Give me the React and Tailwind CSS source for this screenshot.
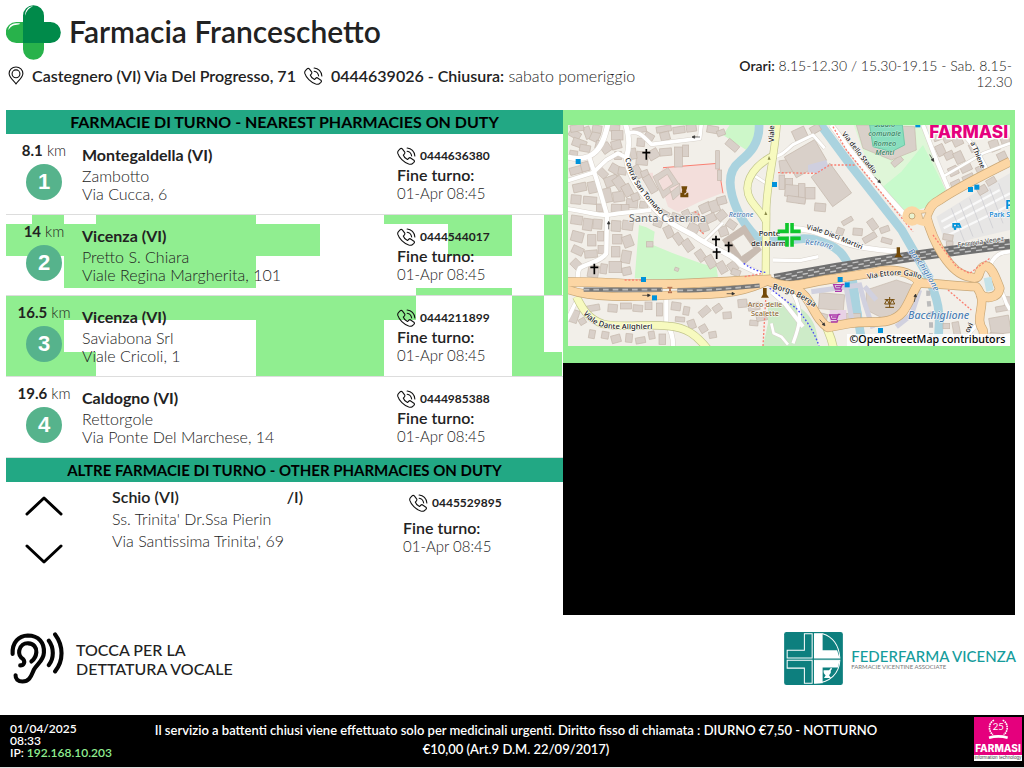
import React from 'react';

const nearest = [
  { id: 1, km: '8.1', city: 'Montegaldella (VI)', name: 'Zambotto', street: 'Via Cucca, 6', phone: '0444636380' },
  { id: 2, km: '14', city: 'Vicenza (VI)', name: 'Pretto S. Chiara', street: 'Viale Regina Margherita, 101', phone: '0444544017' },
  { id: 3, km: '16.5', city: 'Vicenza (VI)', name: 'Saviabona Srl', street: 'Viale Cricoli, 1', phone: '0444211899' },
  { id: 4, km: '19.6', city: 'Caldogno (VI)', name: 'Rettorgole', street: 'Via Ponte Del Marchese, 14', phone: '0444985388' },
];

// green patches behind a row: x, y, width, height
const patches = {
  2: [[26, 0, 32, 9], [90, 0, 160, 9], [378, 0, 128, 9], [0, 9, 314, 32], [442, 9, 64, 32], [58, 41, 192, 32], [410, 73, 96, 7], [538, 0, 18, 80]],
  3: [[0, 0, 410, 24], [506, 0, 32, 56], [0, 24, 58, 32], [250, 24, 128, 56], [0, 56, 90, 24], [506, 56, 50, 24]],
};

const PhoneIcon = () => (
  <svg viewBox="0 0 58 56" className="h-[18px] w-[19px] shrink-0" fill="none" stroke="#111" strokeWidth="3.4" strokeLinecap="round" strokeLinejoin="round" aria-hidden="true">
    <path d="M4 11 L9 6 C11 4 14 4 16 6 L23 15 C25 18 24 20 22 22 L19 25 C21 31 27 37 32 39 L36 35 C38 33 41 33 43 35 L52 41 C54 43 54 46 52 48 L47 52 C44 54 40 54 36 53 C20 48 6 33 2 20 C1 16 1 14 4 11Z" />
    <path d="M31 13 C38 14 44 20 45 28 M31 3 C44 4 54 14 55 28" />
  </svg>
);

const PinIcon = () => (
  <svg viewBox="0 0 48 58" className="h-[19px] w-4 shrink-0" fill="none" stroke="#111" strokeWidth="3.4" strokeLinejoin="round" aria-hidden="true">
    <path d="M24 55 C20 47 3 36 3 23 C3 11 12 3 24 3 C36 3 45 11 45 23 C45 36 28 47 24 55Z" />
    <circle cx="24" cy="24" r="12" />
  </svg>
);

const CrossLogo = () => (
  <svg viewBox="15 15 165 165" className="size-[55px] shrink-0" role="img" aria-label="Farmacia">
    <path d="M66 66 H46 A31 31 0 0 0 46 129 H66 V148 A31 31 0 0 0 129 148 V129 H66Z" fill="#28b24b" />
    <path d="M66 129 V47 A31 31 0 0 1 129 47 V66 H148 A31 31 0 0 1 148 129Z" fill="#008a4a" />
    <path d="M22 91 C23 77 32 71 45 70 C60 69 62 73 48 74 C34 75 27 81 22 91Z M72 47 C73 30 81 20 96 19 C84 24 76 33 72 47Z" fill="#fff" />
  </svg>
);

const EarIcon = () => (
  <svg viewBox="0 0 164 160" className="h-[53px] w-[54px] shrink-0" fill="none" stroke="#050505" strokeWidth="12.5" strokeLinecap="round" aria-hidden="true">
    <path d="M8 66 C6 30 27 11 54 10 C87 10 105 32 103 62 C102 87 82 96 72 115 C65 130 61 150 38 150 C24 150 16 141 17 131" />
    <path d="M31 101 C42 101 47 91 40 82 C31 76 26 68 28 56 C31 40 43 33 56 34 C72 35 81 47 80 61 C79 75 74 82 65 89" />
    <path d="M118 26 C134 47 134 80 118 100 M137 7 C163 42 163 87 137 119" />
  </svg>
);

const FederfarmaMark = () => (
  <svg viewBox="48 38 174 157" className="h-[53px] w-[59px] shrink-0" aria-hidden="true">
    <rect x="48" y="38" width="174" height="157" rx="7" fill="#0d7f7e" />
    <g fill="none" stroke="#fff" strokeWidth="3">
      <path d="M108 43 H131 V115 H57 V92 H108Z" />
      <path d="M57 122 H131 V190 H108 V145 H57Z" />
      <path d="M138 43 H162 C191 51 211 77 213 115 H138Z" />
      <path d="M138 122 H213 C212 159 185 189 138 190Z" />
    </g>
    <path d="M138 43 H162 V92 H205 L212 115 H138Z M138 122 H212 L208 143 H162 V190 H138Z" fill="#fff" />
    <path d="M165 151 H181 L187 144 L190 147 L186 153 C188 159 184 163 181 166 L187 174 H166 L171 166 C166 162 164 158 165 151Z" fill="#fff" />
  </svg>
);

const FarmasiBadge = () => (
  <svg viewBox="0 0 144 132" className="h-11 w-12 shrink-0" role="img" aria-label="Farmasi information technology">
    <rect width="144" height="132" fill="#e5007d" />
    <rect y="114" width="144" height="18" fill="#fff" />
    <g fill="none" stroke="#fff">
      <path d="M60 10 C43 17 42 43 57 53 M86 10 C103 17 104 43 89 53" strokeWidth="5" strokeDasharray="5 2" />
      <path d="M45 62 Q73 54 101 62" strokeWidth="8" />
    </g>
    <text x="73" y="38" textAnchor="middle" fontSize="29" fontWeight="400" fill="#fff" fontFamily="Lato, sans-serif">25</text>
    <text x="72" y="104" textAnchor="middle" fontSize="30" fontWeight="800" fill="#fff" fontFamily="Inter, sans-serif">FARMASI</text>
    <text x="72" y="127" textAnchor="middle" fontSize="14" fill="#444" fontFamily="Liberation Sans, sans-serif">information technology</text>
  </svg>
);

const whiteRoads = [
  ['M135 40 C125 90 110 125 78 139 C50 150 25 145 10 140', 15],
  ['M78 139 L103 215 L132 315 L130 430 C115 455 70 460 50 475 C40 490 45 510 46 530', 13],
  ['M10 213 L90 188 L130 150 L165 130 L185 140', 12],
  ['M187 40 C202 90 198 115 190 145 C195 190 220 230 250 265 C290 325 340 350 390 375 C460 425 500 425 535 465 L600 495', 15],
  ['M10 296 C75 305 100 316 135 315 L170 310 L265 300', 12],
  ['M195 70 C225 60 238 75 265 103 L410 85 L415 40', 11],
  ['M425 392 L480 338', 8],
  ['M310 555 V640 C325 660 332 690 330 720', 13],
  ['M45 565 C30 590 20 620 5 640', 11],
  ['M570 195 C590 205 598 215 615 222', 8],
  ['M630 450 L710 452 L766 440', 10],
  ['M630 140 C655 140 670 120 690 104 L750 75 L785 115', 9],
  ['M666 355 C730 352 770 370 820 390 C880 415 950 420 1010 425', 15],
  ['M805 45 C880 150 955 240 1025 315', 15],
  ['M1080 45 L1120 150 L1160 245', 12],
  ['M1140 200 L1260 130 L1341 100', 8],
  ['M1180 45 L1240 120 L1275 185', 11],
  ['M1341 425 C1310 425 1290 440 1280 470', 11],
  ['M1315 540 L1330 580 L1341 600 M1260 630 C1230 650 1210 680 1200 710', 10],
  ['M690 550 C725 610 705 660 690 700', 10],
  ['M625 545 L665 580 L720 650', 12],
  ['M625 640 L632 670 L655 680 L675 704', 8],
];

const yellowRoads = [
  ['M642 35 C635 150 608 230 610 310 L608 495', 20],
  ['M636 135 C602 150 555 185 553 235 C553 275 590 295 610 335', 20],
  ['M40 560 C60 600 75 625 120 642 C180 655 250 640 315 648 C370 652 400 675 435 718', 21],
  ['M790 650 C800 675 808 690 812 718', 22],
];

const orangeRoads = [
  ['M5 517 C70 513 140 520 220 522 C360 525 460 515 625 508', 25],
  ['M5 535 C80 565 200 563 330 555 C450 555 530 555 620 510', 22],
  ['M610 510 C685 545 725 515 820 505 L930 488 C1000 470 1045 490 1070 515 C1050 540 1042 575 1020 605 C980 650 930 630 860 640 L795 652 C750 625 745 550 690 535', 25],
  ['M1341 155 C1270 190 1190 230 1130 270 C1100 285 1100 300 1090 320 C1110 395 1160 490 1218 500 C1260 515 1240 480 1262 470 C1285 460 1300 510 1310 535 C1305 565 1265 570 1250 550', 25],
  ['M1070 520 C1120 518 1180 530 1240 530 C1280 580 1230 620 1260 660 L1268 718', 24],
];

// x, y, width, height, rotation
const buildings = [
  [18, 62, 35, 22, 30], [28, 88, 42, 24, 20], [64, 50, 20, 36, -20], [83, 65, 26, 29, 25], [50, 105, 32, 20, 10], [20, 122, 24, 14, 8],
  [22, 44, 40, 20, -10], [88, 46, 28, 22, 10], [98, 92, 18, 24, 15], [140, 44, 30, 20, 5],
  [115, 100, 28, 28, -35], [145, 62, 35, 28, 0], [145, 92, 30, 25, -15], [155, 125, 20, 24, 0], [20, 170, 38, 22, -15], [54, 156, 24, 28, -15],
  [30, 220, 40, 25, -12], [75, 215, 26, 34, -12], [24, 255, 30, 27, 5], [61, 260, 40, 22, 5], [102, 178, 32, 22, 45], [125, 198, 40, 30, -20],
  [120, 235, 26, 42, -12], [150, 245, 34, 30, -8], [155, 200, 28, 40, -35], [180, 223, 26, 36, -28], [190, 267, 34, 26, 5], [230, 275, 25, 20, 10],
  [140, 165, 34, 26, 30], [166, 172, 24, 22, 10], [205, 250, 24, 22, -20], [172, 283, 26, 20, 0], [100, 282, 20, 22, 0],
  [145, 283, 30, 23, 3], [24, 317, 34, 26, 8], [60, 326, 28, 35, 8], [90, 328, 27, 29, 5], [25, 365, 36, 30, 15], [74, 374, 25, 34, 0], [104, 364, 18, 29, 0],
  [27, 410, 34, 23, 25], [65, 421, 38, 22, -5], [105, 406, 20, 24, 0], [24, 453, 36, 25, 45], [145, 332, 28, 32, 4], [149, 373, 28, 29, 0], [178, 332, 32, 28, 8],
  [180, 377, 29, 34, -20], [145, 410, 26, 31, 0], [175, 422, 28, 37, 10], [138, 454, 38, 34, 0], [178, 472, 26, 23, -12], [75, 466, 32, 36, 10], [112, 462, 20, 29, 8],
  [210, 52, 40, 16, -10], [245, 70, 28, 18, 30], [280, 48, 45, 18, -10], [292, 66, 28, 25, -15], [330, 50, 36, 20, -8], [370, 43, 30, 22, -8],
  [222, 85, 23, 24, 5], [220, 125, 35, 40, 5], [255, 119, 32, 28, -30], [290, 115, 36, 22, -5], [334, 111, 24, 60, 0], [359, 105, 18, 35, 0], [202, 115, 18, 32, -10],
  [215, 165, 20, 40, -30], [236, 181, 22, 28, -20], [250, 195, 24, 55, -30], [458, 122, 11, 55, 0], [463, 180, 13, 31, 0], [488, 95, 40, 22, 40], [432, 48, 34, 21, 10], [462, 60, 24, 17, -20],
  [290, 302, 28, 22, 30], [325, 311, 30, 20, 20], [361, 300, 22, 34, -25], [386, 305, 24, 30, -20], [410, 280, 34, 26, -25], [440, 272, 28, 34, -20], [462, 260, 28, 23, -15], [375, 341, 33, 25, 28], [410, 337, 26, 28, -20], [428, 312, 30, 24, -25], [460, 304, 30, 25, -40],
  [272, 331, 25, 19, 20], [305, 348, 24, 35, -25], [335, 369, 22, 35, -35], [362, 388, 25, 36, -35], [401, 420, 24, 34, -35], [430, 436, 25, 38, -30], [465, 455, 24, 35, -30], [497, 456, 25, 29, -35], [505, 478, 27, 19, 20],
  [468, 350, 26, 28, -20], [491, 332, 29, 23, 35], [335, 473, 12, 10, 20], [250, 395, 20, 16, 0],
  [22, 600, 24, 38, 18], [48, 625, 20, 18, -30], [72, 585, 38, 18, -10], [78, 660, 18, 25, 10], [116, 665, 21, 21, 10], [145, 675, 28, 23, -15], [188, 671, 20, 26, 5], [218, 682, 29, 18, -10], [257, 664, 18, 23, -10], [288, 672, 20, 31, 0],
  [135, 583, 28, 23, 5], [172, 579, 33, 18, 0], [210, 585, 29, 20, 5], [246, 576, 21, 23, 0], [280, 579, 18, 39, 0], [325, 577, 28, 24, 8], [361, 590, 18, 25, 10], [337, 621, 28, 14, 5], [375, 630, 22, 26, -20], [408, 594, 34, 21, -40], [410, 645, 22, 22, -30], [438, 665, 22, 19, -10], [450, 585, 26, 20, -35], [480, 606, 25, 20, -5], [525, 568, 27, 24, -5], [555, 579, 35, 22, -10], [560, 631, 25, 16, 5], [580, 610, 32, 22, -10],
  [690, 55, 40, 32, -25], [742, 46, 30, 22, -30], [650, 147, 80, 38, -8], [648, 195, 17, 43, 0], [667, 205, 22, 30, 0],
  [675, 110, 105, 72, -30], [770, 170, 70, 110, -36], [666, 225, 43, 35, 5], [706, 221, 20, 58, 0], [728, 232, 28, 35, 0], [672, 260, 55, 19, 8], [755, 280, 33, 24, 5],
  [836, 326, 34, 14, -30], [870, 355, 28, 21, 5], [899, 374, 42, 18, -30], [918, 327, 22, 33, -35], [951, 350, 28, 17, -20], [821, 354, 21, 20, 20], [955, 385, 32, 15, 15],
  [985, 145, 35, 18, -40], [1108, 55, 26, 37, -20], [1138, 63, 30, 33, -25], [1170, 83, 29, 24, -25], [1120, 104, 25, 33, -25], [1145, 125, 27, 22, -25], [1175, 125, 26, 35, -25], [1157, 170, 28, 26, -25], [1192, 160, 33, 25, -25], [1164, 212, 29, 20, -25], [1200, 194, 34, 24, -25], [1240, 168, 25, 22, -25], [1220, 100, 22, 25, -25], [1280, 90, 28, 33, -20], [1304, 127, 27, 26, -25], [1312, 72, 26, 28, -20],
  [1270, 205, 29, 18, -30], [1246, 225, 23, 29, 60], [1140, 373, 30, 18, 10], [1150, 395, 20, 13, 0], [768, 551, 75, 48, 5], [762, 610, 31, 20, 15], [850, 610, 42, 20, 0],
  [1281, 620, 60, 52, -10], [1280, 669, 40, 25, 5], [1325, 560, 20, 29, 5], [1298, 588, 35, 16, -10], [1170, 636, 20, 42, -10], [1140, 640, 20, 16, 0],
];

const churches = [[250, 133], [94, 477], [459, 393], [497, 411], [461, 431]];
const stops = [[45, 154], [634, 223], [241, 508], [274, 563], [831, 508], [852, 524], [952, 661], [1222, 238], [1241, 231], [1064, 44]];
const arrows = [[250, 556, 0], [503, 551, 0], [137, 346, -90], [399, 81, 180], [944, 210, 45], [1106, 144, 60], [1056, 564, -80], [778, 638, 50]];

const StreetMap = () => (
  <svg viewBox="15 45 1326 663" className="block w-full font-medium" role="img" aria-label="Mappa di Vicenza" fontFamily="Noto Sans, sans-serif">
    <rect x="15" y="45" width="1326" height="663" fill="#f2efe9" />
    <path d="M480 75 L500 45 H585 L575 100 L550 120Z M228 345 L250 352 L275 365 L270 405 L330 430 L420 462 L460 470 L465 500 L350 510 L215 505Z" fill="#cdf7c9" />
    <path d="M872 45 H1090 L1145 240 L1110 285 L1015 310 L925 190Z" fill="#dff6d8" />
    <path d="M1015 185 L1080 105 L1148 240 L1110 285 L1020 315 L960 230Z" fill="#c8facc" />
    <path d="M615 575 L690 580 C745 610 765 650 765 708 H600 L615 640Z" fill="#cdebc8" />
    <path d="M300 173 L463 160 L480 248 L410 275 L345 307 L315 290 L285 200Z M220 188 H270 V225Z" fill="#f3dedb" />
    <path d="M300 173 L465 160 L480 250" fill="none" stroke="#fa8072" strokeWidth="3" />
    <path d="M1120 320 L1225 255 L1341 190 V360 L1235 385 L1150 410Z" fill="#e7e6e5" />
    <path d="M1135 335 L1310 240 M1142 355 L1341 250 M1150 378 L1341 285" stroke="#f9f9f9" strokeWidth="7" />
    <path d="M1165 295 L1205 395 M1190 280 L1230 380 M1220 265 L1260 370 M1250 250 L1290 355 M1280 235 L1320 340 M1307 220 L1341 310" stroke="#c8c8cf" strokeWidth="2" />
    <g fill="none" stroke="#aad3df" strokeWidth="26" strokeLinecap="round" strokeLinejoin="round">
      <path d="M588 40 C592 100 560 130 530 155 C485 190 500 250 525 305 C545 350 575 375 590 392 L666 395 C730 375 790 390 830 425 C875 470 870 540 886 630 L900 718" />
      <path d="M770 40 L866 170 L1016 360 L1085 480 C1125 560 1140 610 1120 720" />
      <path d="M866 545 L882 615" strokeWidth="30" />
    </g>

    <g fill="#d9d0c9" stroke="#c5b8ac" strokeWidth="2">
      {buildings.map(([x, y, w, h, r]) => (
        <rect key={`${x}-${y}`} x={x} y={y} width={w} height={h} transform={`rotate(${r} ${x + w / 2} ${y + h / 2})`} />
      ))}
      <path d="M270 200 L315 173 L350 225 L300 265Z M285 212 L300 242 L330 222 L313 193Z M320 235 L350 220 L352 250 L330 270Z" fillRule="evenodd" />
      <path d="M478 390 L545 345 L595 420 L535 470Z M505 395 L535 440 L572 415 L542 372Z" fillRule="evenodd" fill="#c8bbb1" />
      <path d="M910 540 L1000 510 L1048 525 L1050 560 L1020 610 L970 630 L910 600Z" />
      <path d="M880 45 L900 115 L985 150 L1060 120 L1055 50Z" />
    </g>
    <path d="M920 45 L930 110 L985 125 L1025 105 L1018 45Z" fill="#88dfbe" stroke="#6fcaa8" strokeWidth="3" />
    <path d="M735 165 L790 150 L797 170 L765 190 L735 187Z" fill="#cfcfdf" />
    <path d="M800 600 H850 V655 H800Z" fill="#e8d2e6" />
    <path d="M745 545 L890 525 L905 580 L930 655 M850 535 L870 650 M905 530 L940 570 M1070 540 L1045 615 L1000 650" fill="none" stroke="#d1d1df" strokeWidth="15" />

    <g fill="none" strokeLinejoin="round">
      {whiteRoads.map(([d, w]) => <path key={d} d={d} strokeWidth={w + 3} stroke="#d8d2ca" />)}
      {whiteRoads.map(([d, w]) => <path key={d} d={d} strokeWidth={w} stroke="#fff" />)}
      {yellowRoads.map(([d, w]) => <path key={d} d={d} strokeWidth={w + 4} stroke="#c2c58c" />)}
      {yellowRoads.map(([d, w]) => <path key={d} d={d} strokeWidth={w} stroke="#f7fabf" />)}
      <path d="M635 508 C800 478 1000 440 1341 402" strokeWidth="32" stroke="#707070" />
      <path d="M635 500 C800 470 1000 432 1341 394 M635 516 C800 486 1000 448 1341 410" strokeWidth="4" stroke="#c4c4c4" strokeDasharray="18 16" />
      <path d="M635 508 C800 478 1000 440 1341 402" strokeWidth="4" stroke="#c4c4c4" strokeDasharray="16 18" strokeDashoffset="16" />
      <path d="M1100 510 C1085 570 1115 620 1100 705" strokeWidth="12" stroke="#bbb" strokeDasharray="16 16" />
      {orangeRoads.map(([d, w]) => <path key={d} d={d} strokeWidth={w + 4} stroke="#c8a777" />)}
      {orangeRoads.map(([d, w]) => <path key={d} d={d} strokeWidth={w} stroke="#fcd6a4" />)}
      <path d="M62 539 H298 M343 541 C430 542 510 535 590 527" stroke="#777" strokeWidth="13" />
      <path d="M62 539 H298 M343 541 C430 542 510 535 590 527" stroke="#bbb" strokeWidth="5" strokeDasharray="17 12" />
      <path d="M542 460 C570 480 590 485 608 487 M620 535 C655 560 685 585 700 595 C735 635 755 670 768 708" stroke="#4a4af5" strokeWidth="4" strokeDasharray="5 6" />
      <path d="M608 570 L600 708 M645 188 L760 190 L800 165 H875 M810 50 L850 120 L1050 365 M185 510 H235 M545 500 L600 490 M395 305 L410 315 M410 360 L425 375 M1110 375 L1180 470 L1220 490 L1280 445 M1155 540 L1225 600" stroke="#fa8072" strokeWidth="4" strokeDasharray="6 5" />
    </g>
    <circle cx="1047" cy="318" r="29" fill="#fcd6a4" />
    <path d="M1045 300 H1100 L1095 350 C1080 350 1060 340 1045 340Z" fill="#fcd6a4" />
    <circle cx="1047" cy="318" r="9" fill="#e9f2d0" stroke="#c8a777" strokeWidth="3" />
    <path d="M1075 310 L1089 308 L1080 327Z" fill="#f2efe9" stroke="#c8a777" strokeWidth="2" />
    <path d="M1262 505 L1285 500 L1292 540 L1270 545Z" fill="#c4e2e8" />

    {stops.map(([x, y]) => <rect key={x} x={x - 7} y={y - 7} width="15" height="15" fill="#0092da" />)}
    {churches.map(([x, y]) => <path key={x} d={`M${x} ${y - 16} V${y + 16} M${x - 12} ${y - 5} H${x + 12}`} stroke="#000" strokeWidth="5" />)}
    {arrows.map(([x, y, r]) => (
      <path key={x} d="M-12 0 H10 M4 -4 L12 0 L4 4Z" transform={`translate(${x} ${y}) rotate(${r})`} stroke="#333" fill="#333" strokeWidth="2" />
    ))}
    <path d="M614 149 L618 138 L623 149Z M604 315 L608 304 L613 315Z" fill="#8b8b4a" />
    <path d="M355 229 H373 L371 239 H357Z M364 237 a7 7 0 1 1 -1 0Z M352 248 H360 L366 255 L372 248 H376 V262 H352Z" fill="#734a08" />
    <path d="M600 534 H611 V553 L618 563 H594 L600 553Z M1001 412 H1011 V432 L1018 442 H994 L1001 432Z" fill="#734a08" />
    <path d="M313 532 H328 M315 548 H327 M317 532 L326 548 M325 532 L316 548" stroke="#b06a4a" strokeWidth="3" />
    <path d="M980 561 V592 M967 592 H993 M965 569 H995 M972 568 L965 582 H979Z M988 568 L981 582 H995Z" fill="none" stroke="#734a08" strokeWidth="3" />
    <path d="M844 523 H838 L832 537 H817 L812 524 H839 M836 538 L834 544 H816 M819 530 H835 M832 613 H826 L821 628 H805 L800 615 H827 M824 630 L822 636 H804 M807 621 H823" fill="none" stroke="#ac39ac" strokeWidth="4" />
    <path d="M1168 339 H1190 L1196 353 H1168Z M1173 344 V349 H1179 V344Z M1184 344 V349 H1190Z" fill="#0092da" fillRule="evenodd" />
    <circle cx="1176" cy="356" r="4" fill="#0092da" />

    <defs>
      <path id="tomaso" d="M187 145 C194 190 220 232 240 255 C265 285 280 300 300 325" />
      <path id="dante" d="M60 610 C80 640 110 652 145 656 H300" />
      <path id="marmi" d="M730 358 C775 365 810 385 900 420" />
      <path id="retrone" d="M727 405 C760 402 790 410 830 430" />
      <path id="stadio" d="M836 72 C865 110 900 155 930 190 L940 202" />
      <path id="gallo" d="M914 508 C970 495 1020 490 1062 503 L1100 520" />
      <path id="berga" d="M628 537 C675 545 715 560 770 605" />
      <path id="bacch" d="M1035 425 C1070 465 1100 510 1130 580" />
    </defs>
    <g fill="#222" stroke="#fff" strokeWidth="3" paintOrder="stroke" fontSize="22">
      <text><textPath href="#tomaso">Contrà San Tomaso</textPath></text>
      <text fontSize="23"><textPath href="#dante">Viale Dante Alighieri</textPath></text>
      <text fontSize="21"><textPath href="#marmi">Viale Dieci Martiri</textPath></text>
      <text fontSize="21"><textPath href="#stadio">Via dello Stadio</textPath></text>
      <text fontSize="22"><textPath href="#gallo">Via Ettore Gallo</textPath></text>
      <text fontSize="23"><textPath href="#berga">Borgo Berga</textPath></text>
      <text transform="translate(632 97) rotate(-88)">Viale</text>
      <text transform="translate(1222 98) rotate(68)" fontSize="21">a Thiene</text>
      <text transform="translate(1218 670) rotate(-65)">ovi</text>
      <text transform="translate(1185 412) rotate(-8)" fontSize="20" fill="#555">Ferrovia Venez</text>
      <text x="587" y="378" fontSize="23">Ponte</text>
      <text x="564" y="407" fontSize="23">dei Marmi</text>
      <text x="313" y="336" textAnchor="middle" fontSize="33" fill="#777">Santa Caterina</text>
      <g textAnchor="middle" fontSize="22" fill="#8b6734">
        <text x="606" y="592">Arco delle</text>
        <text x="606" y="619">Scalette</text>
      </g>
      <g fontStyle="italic" fill="#4d80b3">
        <text x="497" y="322" fontSize="21">Retrone</text>
        <text fontSize="23"><textPath href="#retrone">Retrone</textPath></text>
        <text fontSize="25"><textPath href="#bacch">Bacchiglione</textPath></text>
        <text x="1035" y="626" fontSize="32">Bacchiglione</text>
      </g>
      <g fontStyle="italic" textAnchor="middle" fontSize="22" fill="#2b805b" strokeWidth="1">
        <text x="965" y="52">Stadio</text>
        <text x="965" y="79">comunale</text>
        <text x="965" y="107">Romeo</text>
        <text x="965" y="135">Menti</text>
      </g>
      <text x="1279" y="322" fontSize="21" fill="#0080cf">Park S</text>
      <text x="1326" y="298" fontSize="38" fontWeight="700" fill="#0092da">P</text>
    </g>
    <path d="M672 339 V364 H644 M687 339 V364 H713 M644 385 H672 V410 M713 385 H687 V410" fill="none" stroke="#10c62c" strokeWidth="11" />
    <path d="M644 375 H713 M680 339 V410" stroke="#eaffea" strokeWidth="3" />
    <text x="1217" y="84" textAnchor="middle" fontSize="52" fontWeight="800" fill="#e5007d" stroke="#fff" strokeWidth="8" paintOrder="stroke" fontFamily="Inter, sans-serif">FARMASI</text>
    <rect x="852" y="672" width="489" height="36" fill="#fff" fillOpacity="0.85" />
    <text x="1327" y="700" textAnchor="end" fontSize="32" fill="#000">©OpenStreetMap contributors</text>
  </svg>
);

const PhoneLink = ({ phone }) => (
  <a href={`tel:${phone}`} className="flex items-center gap-1 text-xs leading-5 font-bold">
    <PhoneIcon />
    {phone}
  </a>
);

const PharmacyRow = ({ item }) => (
  <li className="relative grid h-[81px] grid-cols-[76px_1fr_166px] border-b border-[#ddd]">
    {patches[item.id] && (
      <svg className="absolute top-0 left-0 -z-10 h-20 w-full" aria-hidden="true">
        {patches[item.id].map(([x, y, w, h]) => <rect key={`${x}-${y}`} x={x} y={y} width={w} height={h} fill="#90ee90" />)}
      </svg>
    )}
    <div className="flex flex-col items-center gap-1 pt-1.5">
      <p className="text-[15px] leading-5"><strong className="font-bold">{item.km}</strong> km</p>
      <span className="flex size-9 items-center justify-center rounded-full bg-[#56b38c] font-['Liberation_Sans',sans-serif] text-[22px] font-bold text-white">{item.id}</span>
    </div>
    <div className="pt-[11px]">
      <h3 className="mb-0.5 leading-5 font-bold">{item.city}</h3>
      <p>{item.name}</p>
      <p>{item.street}</p>
    </div>
    <div className="pt-3">
      <PhoneLink phone={item.phone} />
      <p className="font-semibold">Fine turno:</p>
      <p className="text-[15px]">01-Apr 08:45</p>
    </div>
  </li>
);

const Chevron = ({ label, points }) => (
  <button type="button" aria-label={label} className="flex h-5 w-10 items-center justify-center">
    <svg viewBox="0 0 38 20" className="h-5 w-[38px]" fill="none" stroke="#000" strokeWidth="3" strokeLinecap="round" strokeLinejoin="round">
      <polyline points={points} />
    </svg>
  </button>
);

export default function App() {
  return (
    <div className="relative isolate flex min-h-screen flex-col bg-white font-['Lato',sans-serif] text-base leading-[18px] font-light text-[#222]">
      <header className="flex h-[110px] items-start justify-between pr-3 pl-1.5">
        <div className="pt-[5px]">
          <div className="flex items-center gap-2">
            <CrossLogo />
            <h1 className="pb-1 text-[30px] leading-9 font-semibold">Farmacia Franceschetto</h1>
          </div>
          <div className="flex items-center gap-2 pt-1.5 pl-0.5">
            <PinIcon />
            <strong className="font-semibold">Castegnero (VI) Via Del Progresso, 71</strong>
            <PhoneIcon />
            <p><strong className="font-semibold">0444639026 - Chiusura:</strong> sabato pomeriggio</p>
          </div>
        </div>
        <p className="pt-[58px] text-right text-sm leading-4"><strong className="font-semibold">Orari:</strong> 8.15-12.30 / 15.30-19.15 - Sab. 8.15-<br />12.30</p>
      </header>

      <main className="grid grid-cols-[557fr_452fr] pr-[9px] pl-1.5">
        <section>
          <h2 className="bg-[#22a884] text-center text-base leading-6 font-bold text-black">FARMACIE DI TURNO - NEAREST PHARMACIES ON DUTY</h2>
          <ul>
            {nearest.map((item) => <PharmacyRow key={item.id} item={item} />)}
          </ul>
          <h2 className="bg-[#22a884] text-center text-[15px] leading-6 font-bold text-black">ALTRE FARMACIE DI TURNO - OTHER PHARMACIES ON DUTY</h2>
          <div className="grid grid-cols-[106px_1fr_160px]">
            <div className="flex flex-col gap-7 pt-3.5 pl-[18px]">
              <Chevron label="Precedente" points="2,18 19,2 36,18" />
              <Chevron label="Successiva" points="2,2 19,18 36,2" />
            </div>
            <div className="pt-1 leading-[22px]">
              <div className="flex justify-between pr-[100px] font-semibold">
                <h3>Schio (VI)</h3>
                <span>/I)</span>
              </div>
              <p>Ss. Trinita' Dr.Ssa Pierin</p>
              <p>Via Santissima Trinita', 69</p>
            </div>
            <div className="pt-[11px]">
              <div className="pb-1.5 pl-1.5"><PhoneLink phone="0445529895" /></div>
              <p className="font-semibold">Fine turno:</p>
              <p className="text-[15px]">01-Apr 08:45</p>
            </div>
          </div>
        </section>
        <aside className="flex flex-col bg-black">
          <div className="bg-[#90ee90] px-[5px] pt-[15px] pb-[17px]">
            <StreetMap />
          </div>
          <div className="h-[252px]" />
        </aside>
      </main>

      <div className="flex items-center justify-between pt-[17px] pr-2 pl-2.5">
        <button type="button" className="flex items-center gap-3 text-left text-base leading-[19px] font-medium">
          <EarIcon />
          <span>TOCCA PER LA<br />DETTATURA VOCALE</span>
        </button>
        <div className="flex items-center gap-2">
          <FederfarmaMark />
          <div>
            <p className="text-[15px] leading-4 font-medium text-[#159c9c]">FEDERFARMA VICENZA</p>
            <p className="text-[6px] leading-[6px] font-normal text-[#777]">FARMACIE VICENTINE ASSOCIATE</p>
          </div>
        </div>
      </div>

      <footer className="mt-auto flex h-[53px] items-start justify-between border-b border-[#ddd] bg-black pr-0.5 pl-2.5 text-white">
        <div className="w-[130px] pt-2 text-xs leading-3 font-semibold">
          <p>01/04/2025</p>
          <p>08:33</p>
          <p>IP: <span className="text-[#90ee90]">192.168.10.203</span></p>
        </div>
        <p className="max-w-[740px] flex-1 pt-1.5 text-center text-[13px] leading-[19px] font-semibold">
          Il servizio a battenti chiusi viene effettuato solo per medicinali urgenti. Diritto fisso di chiamata : DIURNO €7,50 - NOTTURNO €10,00 (Art.9 D.M. 22/09/2017)
        </p>
        <div className="flex w-[130px] justify-end pt-0.5">
          <FarmasiBadge />
        </div>
      </footer>
    </div>
  );
}
